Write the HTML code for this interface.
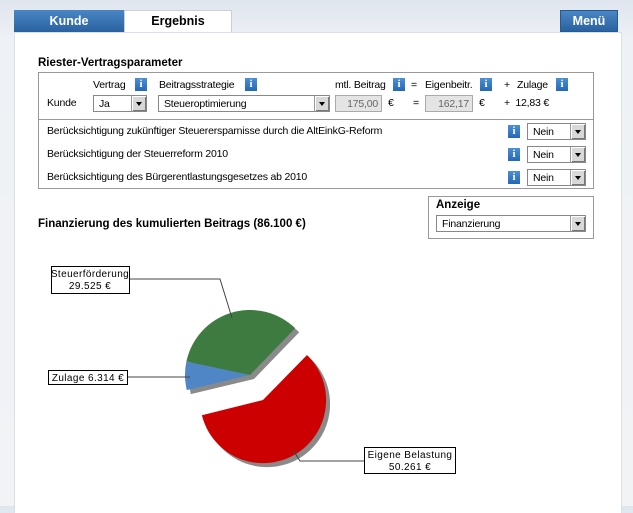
<!DOCTYPE html>
<html><head><meta charset="utf-8"><style>
body{margin:0;width:633px;height:506px;background:linear-gradient(#dfe5ee,#eef1f5 40px,#f2f3f5);font-family:"Liberation Sans",Arial,sans-serif;font-size:10.5px;letter-spacing:-0.2px;color:#000;position:relative;overflow:hidden}
.a{position:absolute;white-space:nowrap}
.tab{position:absolute;top:10px;height:22px;line-height:22px;text-align:center;font-weight:bold;font-size:12.5px;letter-spacing:0}
.i{position:absolute;width:12px;height:13px;background:linear-gradient(#4b8fd6,#2467b5);color:#fff;font-weight:bold;font-size:11px;text-align:center;line-height:13px;font-family:"Liberation Serif",serif;letter-spacing:0}
.sel{position:absolute;border:1px solid #888;background:#fff;line-height:15px;padding-left:5px;padding-top:1px;box-sizing:border-box;height:17px}
.sel:after{content:"";position:absolute;right:0;top:0;width:14px;height:15px;background:#d8d8d8;border-left:1px solid #999;box-shadow:inset 1px 1px #fff,inset -1px -1px #777}
.sel b{position:absolute;right:4px;top:6px;width:0;height:0;border-left:3px solid transparent;border-right:3px solid transparent;border-top:4px solid #000;z-index:2}
.inp{position:absolute;height:17px;border:1px solid #aaa;background:#e4e4e4;color:#666;text-align:right;line-height:17px;padding-right:3px;box-sizing:border-box}
.h{font-weight:bold;font-size:11.5px;letter-spacing:0}
</style></head><body>
<div class="tab" style="left:14px;width:110px;background:linear-gradient(#4a86c4,#2a62a0);color:#fff">Kunde</div>
<div class="tab" style="left:124px;width:108px;background:#fff;border:1px solid #ccd;border-bottom:none;height:22px;box-sizing:border-box;line-height:20px">Ergebnis</div>
<div class="tab" style="left:560px;width:58px;background:linear-gradient(#4a86c4,#2a62a0);color:#fff;border:1px solid #235a96;box-sizing:border-box;line-height:20px">Menü</div>
<div class="a" style="left:14px;top:32px;width:606px;height:480px;background:#fff;border-left:1px solid #dde;border-right:1px solid #dde;border-top:1px solid #dde"></div>
<div class="a h" style="left:38px;top:57px">Riester-Vertragsparameter</div>
<div class="a" style="left:38px;top:72px;width:556px;height:117px;border:1px solid #999;box-sizing:border-box"></div>
<div class="a" style="left:38px;top:119px;width:556px;border-top:1px solid #999"></div>
<div class="a" style="left:93px;top:79px">Vertrag</div><div class="i" style="left:135px;top:78px">i</div>
<div class="a" style="left:159px;top:79px">Beitragsstrategie</div><div class="i" style="left:245px;top:78px">i</div>
<div class="a" style="left:335px;top:79px">mtl. Beitrag</div><div class="i" style="left:393px;top:78px">i</div>
<div class="a" style="left:411px;top:79px">=</div>
<div class="a" style="left:425px;top:79px">Eigenbeitr.</div><div class="i" style="left:480px;top:78px">i</div>
<div class="a" style="left:504px;top:79px">+</div>
<div class="a" style="left:517px;top:79px">Zulage</div><div class="i" style="left:556px;top:78px">i</div>
<div class="a" style="left:47px;top:97px">Kunde</div>
<div class="sel" style="left:93px;top:95px;width:54px">Ja<b></b></div>
<div class="sel" style="left:158px;top:95px;width:172px">Steueroptimierung<b></b></div>
<div class="inp" style="left:335px;top:95px;width:47px">175,00</div><div class="a" style="left:388px;top:97px">€</div>
<div class="a" style="left:413px;top:97px">=</div>
<div class="inp" style="left:425px;top:95px;width:48px">162,17</div><div class="a" style="left:479px;top:97px">€</div>
<div class="a" style="left:504px;top:97px">+ &nbsp;12,83 €</div>
<div class="a" style="left:47px;top:125px">Berücksichtigung zukünftiger Steuerersparnisse durch die AltEinkG-Reform</div>
<div class="a" style="left:47px;top:148px">Berücksichtigung der Steuerreform 2010</div>
<div class="a" style="left:47px;top:171px">Berücksichtigung des Bürgerentlastungsgesetzes ab 2010</div>
<div class="i" style="left:508px;top:125px">i</div><div class="sel" style="left:527px;top:123px;width:59px">Nein<b></b></div>
<div class="i" style="left:508px;top:148px">i</div><div class="sel" style="left:527px;top:146px;width:59px">Nein<b></b></div>
<div class="i" style="left:508px;top:171px">i</div><div class="sel" style="left:527px;top:169px;width:59px">Nein<b></b></div>
<div class="a" style="left:428px;top:196px;width:166px;height:43px;border:1px solid #999;box-sizing:border-box"></div>
<div class="a h" style="left:436px;top:199px">Anzeige</div>
<div class="sel" style="left:436px;top:215px;width:150px">Finanzierung<b></b></div>
<div class="a h" style="left:38px;top:218px">Finanzierung des kumulierten Beitrags (86.100 €)</div>
<svg class="a" style="left:0;top:0" width="633" height="506">
<g fill="#8a8a8a" transform="translate(4,4)">
<path d="M250,375 L186.8,390.1 A65,65 0 0 1 186.4,361.5 A65,65 0 0 1 295.2,328.3 Z"/>
<path d="M263,400 L307,355 A63,63 0 1 1 201.9,415.2 Z"/>
</g>
<path d="M250,375 L186.8,390.1 A65,65 0 0 1 186.4,361.5 Z" fill="#4f86c6"/>
<path d="M250,375 L186.4,361.5 A65,65 0 0 1 295.2,328.3 Z" fill="#3e7b41"/>
<path d="M263,400 L307,355 A63,63 0 1 1 201.9,415.2 Z" fill="#cc0000"/>
<g stroke="#444" fill="none" stroke-width="1">
<path d="M129,279 H220 L232,318"/>
<path d="M127,377 H190"/>
<path d="M293,450 L300,461 H364"/>
</g>
<g fill="#fff" stroke="#000">
<rect x="51.5" y="266.5" width="78" height="27"/>
<rect x="48.5" y="370.5" width="79" height="14"/>
<rect x="364.5" y="447.5" width="91" height="26"/>
</g>
<g font-family="Liberation Sans,Arial,sans-serif" font-size="10" text-anchor="middle" letter-spacing="0.4">
<text x="90" y="277">Steuerförderung</text><text x="90" y="289">29.525 €</text>
<text x="88" y="381">Zulage 6.314 €</text>
<text x="410" y="458">Eigene Belastung</text><text x="410" y="470">50.261 €</text>
</g>
</svg>
</body></html>
